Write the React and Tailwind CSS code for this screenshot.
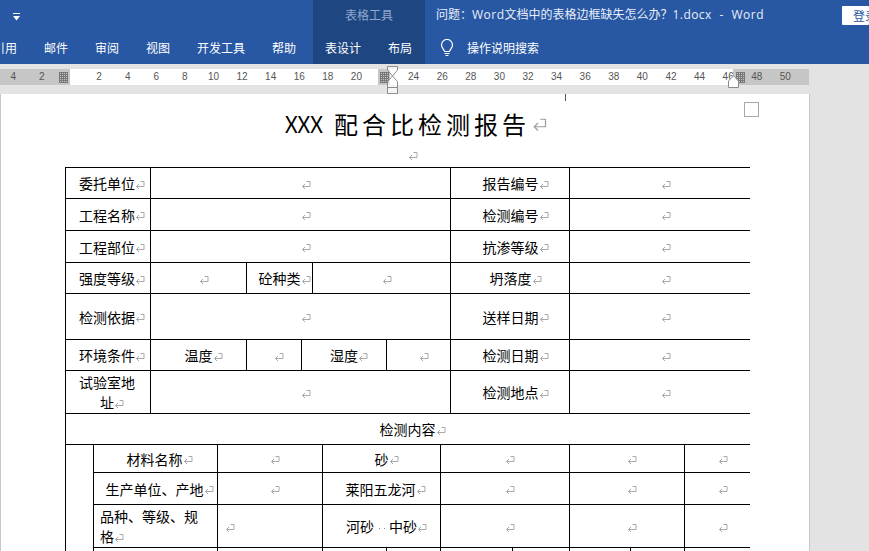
import React from 'react';

const tabs = [
  ['邮件', 'w-[51px]'],
  ['审阅', 'w-[51px]'],
  ['视图', 'w-[51px]'],
  ['开发工具', 'w-[75px]'],
  ['帮助', 'w-[51px]'],
];

// 段落标记: 不占宽度, 所以单元格里的文字还是居中的
const Mark = ({ big }) => (
  <span className="inline-block w-0 overflow-visible align-middle">
    <svg
      viewBox="0 0 10 10"
      className={big ? 'w-[15px] h-[15px] ml-[2px] block' : 'w-[10px] h-[10px] block -mt-[1px]'}
      fill="none"
      stroke={big ? '#9a9a9a' : '#a8a8a8'}
      strokeWidth={big ? 0.8 : 1}
    >
      <path d="M5.500 1.500H9V6.500H1.500" />
      <path d="M4 4 1.500 6.500 4 9" />
    </svg>
  </span>
);

const Hatch = ({ className }) => (
  <span
    className={`absolute top-[3px] w-[9px] h-[11px] bg-[#c6c6c6] bg-[linear-gradient(#777_1px,transparent_1px),linear-gradient(90deg,#777_1px,transparent_1px)] bg-[size:2px_2px] ${className}`}
  />
);

const rulerNums = ['4', '2', '', '2', '4', '6', '8', '10', '12', '14', '16', '18', '20', '', '24', '26', '28', '30', '32', '34', '36', '38', '40', '42', '44', '46', '48', '50'];

const Ruler = () => (
  <div className="h-[30px] bg-[#e3e3e3] pt-[5px] shrink-0">
    <div className="relative w-[809px] h-[16px] bg-[linear-gradient(90deg,#c6c6c6_70px,#fff_70px,#fff_378px,#c6c6c6_378px,#c6c6c6_390px,#fff_390px,#fff_733px,#c6c6c6_733px)]">
      <div className="flex -ml-[1px] text-[10px] leading-[16px] text-[#555] font-['Liberation_Sans',sans-serif]">
        {rulerNums.map((n, i) => (
          <span key={i} className="w-[28.6px] shrink-0 text-center">{n}</span>
        ))}
      </div>
      <Hatch className="left-[59px]" />
      <Hatch className="left-[380px]" />
      <Hatch className="left-[736px]" />
      {/* 左缩进 / 首行缩进标记 */}
      <svg viewBox="0 0 11 28" className="absolute left-[387px] -top-[3px] w-[11px] h-[28px]" fill="none" stroke="#8c8c8c">
        <path d="M.5.5h10V4l-5 6-5-6Z" fill="#fff" fillOpacity="0.6" />
        <path d="M5.500 10l5 5.500v12H.5v-12Z" fill="#fff" fillOpacity="0.6" />
        <path d="M.5 21.500h10" />
      </svg>
      <svg viewBox="0 0 11 13" className="absolute left-[728px] top-[6px] w-[11px] h-[13px]" fill="#fff" stroke="#8c8c8c">
        <path d="M.5 6 5.500.7l5 5.300v6.500H.5Z" />
      </svg>
    </div>
  </div>
);

const Cell = ({ w, text, mark = true, className = '' }) => (
  <div className={`${w} h-full shrink-0 border-r border-black flex items-center justify-center text-center ${className}`}>
    <div>
      {text}
      {mark && <Mark />}
    </div>
  </div>
);

const Row = ({ h, children }) => (
  <div className={`${h} flex border-b border-black box-border`}>{children}</div>
);

const Table = () => (
  <div className="w-[685px] overflow-hidden border-t border-l border-black text-[14px] leading-[20px] text-black">
    <Row h="h-[31px]">
      <Cell w="w-[85px]" text="委托单位" className="pr-[2px]" />
      <Cell w="w-[300px]" />
      <Cell w="w-[119px]" text="报告编号" className="pl-[1px]" />
      <Cell w="w-[181px]" className="border-r-0" />
    </Row>
    <Row h="h-[32px]">
      <Cell w="w-[85px]" text="工程名称" className="pr-[2px]" />
      <Cell w="w-[300px]" />
      <Cell w="w-[119px]" text="检测编号" className="pl-[1px]" />
      <Cell w="w-[181px]" className="border-r-0" />
    </Row>
    <Row h="h-[32px]">
      <Cell w="w-[85px]" text="工程部位" className="pr-[2px]" />
      <Cell w="w-[300px]" />
      <Cell w="w-[119px]" text="抗渗等级" className="pl-[1px]" />
      <Cell w="w-[181px]" className="border-r-0" />
    </Row>
    <Row h="h-[31px]">
      <Cell w="w-[85px]" text="强度等级" className="pr-[2px]" />
      <Cell w="w-[96px]" />
      <Cell w="w-[66px]" text="砼种类" />
      <Cell w="w-[138px]" />
      <Cell w="w-[119px]" text="坍落度" className="pl-[1px]" />
      <Cell w="w-[181px]" className="border-r-0" />
    </Row>
    <Row h="h-[46px]">
      <Cell w="w-[85px]" text="检测依据" className="pr-[2px]" />
      <Cell w="w-[300px]" />
      <Cell w="w-[119px]" text="送样日期" className="pl-[1px]" />
      <Cell w="w-[181px]" className="border-r-0" />
    </Row>
    <Row h="h-[31px]">
      <Cell w="w-[85px]" text="环境条件" className="pr-[2px]" />
      <Cell w="w-[96px]" text="温度" />
      <Cell w="w-[55px]" />
      <Cell w="w-[85px]" text="湿度" />
      <Cell w="w-[64px]" />
      <Cell w="w-[119px]" text="检测日期" className="pl-[1px]" />
      <Cell w="w-[181px]" className="border-r-0" />
    </Row>
    <Row h="h-[43px]">
      <Cell w="w-[85px]" text={<>试验室地<br />址</>} className="pr-[2px]" />
      <Cell w="w-[300px]" />
      <Cell w="w-[119px]" text="检测地点" className="pl-[1px]" />
      <Cell w="w-[181px]" className="border-r-0" />
    </Row>
    <Row h="h-[31px]">
      <Cell w="w-[685px]" text="检测内容" className="border-r-0 pr-[2px]" />
    </Row>
    <div className="flex">
      <div className="w-[28px] shrink-0 border-r border-black" />
      <div className="flex-1">
        <Row h="h-[28px]">
          <Cell w="w-[124px]" text="材料名称" className="pr-[2px]" />
          <Cell w="w-[105px]" />
          <Cell w="w-[118px]" text="砂" />
          <Cell w="w-[129px]" />
          <Cell w="w-[115px]" />
          <Cell w="w-[66px]" className="border-r-0" />
        </Row>
        <Row h="h-[32px]">
          <Cell w="w-[124px]" text="生产单位、产地" className="pr-[2px]" />
          <Cell w="w-[105px]" />
          <Cell w="w-[118px]" text="莱阳五龙河" className="pr-[2px]" />
          <Cell w="w-[129px]" />
          <Cell w="w-[115px]" />
          <Cell w="w-[66px]" className="border-r-0" />
        </Row>
        <Row h="h-[43px]">
          <Cell w="w-[124px]" text={<>品种、等级、规<br />格</>} className="!justify-start !text-left pl-[6px]" />
          <Cell w="w-[105px]" className="!justify-start pl-[7px]" />
          <Cell
            w="w-[118px]"
            text={
              <>
                河砂
                <span className="inline-flex w-[15px] justify-center gap-[4px] align-middle">
                  <span className="w-[1px] h-[1px] bg-[#888]" />
                  <span className="w-[1px] h-[1px] bg-[#888]" />
                </span>
                中砂
              </>
            }
          />
          <Cell w="w-[129px]" />
          <Cell w="w-[115px]" />
          <Cell w="w-[66px]" className="border-r-0" />
        </Row>
        <div className="h-[20px] flex">
          <Cell w="w-[124px]" mark={false} />
          <Cell w="w-[105px]" mark={false} />
          <Cell w="w-[64px]" mark={false} />
          <Cell w="w-[54px]" mark={false} />
          <Cell w="w-[72px]" mark={false} />
          <Cell w="w-[57px]" mark={false} />
          <Cell w="w-[61px]" mark={false} />
          <Cell w="w-[54px]" mark={false} />
          <Cell w="w-[66px]" mark={false} className="border-r-0" />
        </div>
      </div>
    </div>
  </div>
);

export default function App() {
  return (
    <div className="w-[869px] h-[551px] overflow-hidden flex flex-col bg-[#e3e3e3] font-['Noto_Sans_CJK_SC',sans-serif]">
      {/* 标题栏 + 功能区标签 */}
      <div className="h-[64px] shrink-0 flex bg-[#2858a3] text-white text-[12px]">
        <div className="w-[313px] shrink-0 overflow-hidden">
          <div className="h-[32px] pl-[13px] pt-[13px]">
            <svg viewBox="0 0 7 8" className="w-[7px] h-[8px]" fill="#fff">
              <path d="M0 0h7v1H0ZM0 3h7L3.500 7.500Z" />
            </svg>
          </div>
          <div className="h-[32px] flex items-center whitespace-nowrap">
            <span className="-ml-[7px] w-[51px] shrink-0">引用</span>
            {tabs.map(([t, w]) => (
              <span key={t} className={`${w} shrink-0`}>{t}</span>
            ))}
          </div>
        </div>
        <div className="w-[112px] shrink-0 bg-[#1e4680]">
          <div className="h-[32px] pb-[2px] flex items-center justify-center text-[#8fa8cf]">表格工具</div>
          <div className="h-[32px] flex items-center pl-[12px]">
            <span className="w-[63px] shrink-0">表设计</span>
            <span>布局</span>
          </div>
        </div>
        <div className="flex-1 min-w-0">
          <div className="h-[32px] flex items-start justify-between">
            <div className="pl-[11px] pt-[6px] leading-[18px] whitespace-nowrap text-[#e8eef8] font-['Open_Sans','Noto_Sans_CJK_SC',sans-serif]">
              问题：<span className="tracking-[0.5px]">Word</span>文档中的表格边框缺失怎么办？<span className="tracking-[0.4px]">1.docx</span>
              <span className="mx-[8px]">-</span>
              <span className="tracking-[0.5px]">Word</span>
            </div>
            <div className="mt-[6px] w-[27px] h-[19px] bg-white text-[#2858a3] rounded-[1px] pl-[11px] leading-[19px] overflow-hidden whitespace-nowrap">
              登录
            </div>
          </div>
          <div className="h-[32px] flex items-center pl-[14px]">
            <svg viewBox="0 0 16 18" className="w-[16px] h-[18px] mr-[12px]" fill="none" stroke="#fff" strokeWidth="1.2">
              <path d="M5.500 12.500C5 10 2.500 9 2.500 6a5.500 5.500 0 0 1 11 0c0 3-2.500 4-3 6.500Z" />
              <path d="M5.500 14.500h5M6.500 16.500h3" />
            </svg>
            <span>操作说明搜索</span>
          </div>
        </div>
      </div>

      <Ruler />

      {/* 页面 */}
      <div className="relative w-[810px] flex-1 bg-white border-x border-[#c8c8c8]">
        <span className="absolute left-[564px] top-0 w-[1px] h-[7px] bg-[#555]" />
        <span className="absolute left-[743px] top-[8px] w-[15px] h-[15px] border border-[#a8a8a8]" />
        <div className="ml-[64px] w-[685px]">
          <div className="mt-[13px] h-[34px] flex items-center justify-center text-black whitespace-nowrap text-[24px] leading-[34px] tracking-[4px]">
            {/* 原图的 XXX 是窄字体, 这里横向压一下 */}
            <span className="inline-block w-[38px] mr-[11px] font-['Lato',sans-serif] tracking-[0px] scale-x-[0.81] origin-left">XXX</span>
            配合比检测报告
            <Mark big />
          </div>
          <div className="h-[26px] pt-[4px] flex items-center justify-center">
            <Mark />
          </div>
          <Table />
        </div>
      </div>
    </div>
  );
}
